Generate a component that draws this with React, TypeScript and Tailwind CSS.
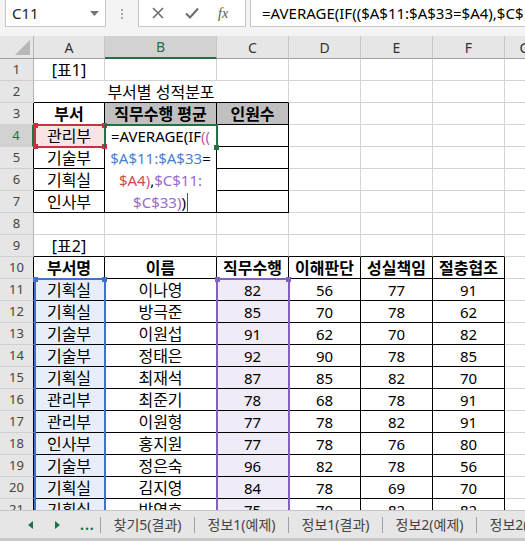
import clsx from 'clsx'

// column letters after the row-header column
const COLS = ['A', 'B', 'C', 'D', 'E', 'F', 'G']

// black bordered ranges: 표1 A3:C7, 표2 A10:F33
function isBox(r: number, c: number) {
  if (r >= 3 && r <= 7 && c >= 1 && c <= 3) return true
  if (r >= 10 && r <= 33 && c >= 1 && c <= 6) return true
  return false
}

const DATA = [
  ['기획실', '이나영', '82', '56', '77', '91'],
  ['기획실', '방극준', '85', '70', '78', '62'],
  ['기술부', '이원섭', '91', '62', '70', '82'],
  ['기술부', '정태은', '92', '90', '78', '85'],
  ['기획실', '최재석', '87', '85', '82', '70'],
  ['관리부', '최준기', '78', '68', '78', '91'],
  ['관리부', '이원형', '77', '78', '82', '91'],
  ['인사부', '홍지원', '77', '78', '76', '80'],
  ['기술부', '정은숙', '96', '82', '78', '56'],
  ['기획실', '김지영', '84', '78', '69', '70'],
  ['기획실', '박영호', '75', '70', '82', '82'],
]

const HANGUL = /[\uac00-\ud7a3]/

interface CellProps {
  r: number
  c: number
  span?: number
  rowSpan?: number
  bg?: string
  bold?: boolean
  children?: React.ReactNode
}

function Cell({ r, c, span = 1, rowSpan = 1, bg = 'bg-white', bold, children }: CellProps) {
  const right = isBox(r, c + span - 1) || isBox(r, c + span)
  const bottom = isBox(r + rowSpan - 1, c) || isBox(r + rowSpan, c)
  const korean = typeof children === 'string' && HANGUL.test(children)
  return (
    <div
      className={clsx(
        'flex items-center justify-center border-r border-b leading-[22px] text-black whitespace-nowrap overflow-visible',
        korean ? 'text-[16px]' : 'text-[15px]',
        right ? 'border-r-black' : 'border-r-[#d4d4d4]',
        bottom ? 'border-b-black' : 'border-b-[#d4d4d4]',
        span === 3 && 'col-span-3',
        rowSpan === 4 && 'row-span-4 items-start',
        bg,
        bold && 'font-bold'
      )}
    >
      {children}
    </div>
  )
}

function RowHead({ r }: { r: number }) {
  const active = r === 4
  return (
    <div
      className={clsx(
        'flex items-center justify-center border-b border-b-[#d0d0d0] text-[13px] font-["Noto_Sans",sans-serif]',
        active
          ? 'bg-[#d2d2d2] text-[#217346] border-r-2 border-r-[#217346]'
          : clsx('bg-[#e6e6e6] text-[#444] border-r', isBox(r, 1) ? 'border-r-black' : 'border-r-[#b4b4b4]')
      )}
    >
      {r}
    </div>
  )
}

function FormulaBar() {
  return (
    <div className="h-[36px] shrink-0 bg-[#f3f3f3] flex items-start">
      {/* name box */}
      <div className="ml-[5px] w-[101px] h-[27px] bg-white border border-t-0 border-[#c6c6c6] flex items-center justify-between pl-[6px] pr-[6px]">
        <span className="text-[15px] text-[#222] font-['Noto_Sans',sans-serif]">C11</span>
        <svg width="9" height="5" viewBox="0 0 9 5"><path d="M0 0h9L4.5 5z" fill="#777" /></svg>
      </div>
      <div className="w-[32px] h-[27px] flex flex-col items-center justify-center gap-[2px]">
        <span className="w-[2px] h-[2px] bg-[#a8a8a8]" />
        <span className="w-[2px] h-[2px] bg-[#a8a8a8]" />
        <span className="w-[2px] h-[2px] bg-[#a8a8a8]" />
      </div>
      {/* cancel / enter / fx */}
      <div className="w-[108px] h-[27px] bg-white border border-t-0 border-[#c6c6c6] flex items-center">
        <svg className="ml-[13px]" width="12" height="12" viewBox="0 0 12 12">
          <path d="M1 1l10 10M11 1L1 11" stroke="#6d6d6d" strokeWidth="1.6" />
        </svg>
        <svg className="ml-[21px]" width="14" height="12" viewBox="0 0 14 12">
          <path d="M1 6.5l4 4L13 1.5" stroke="#6d6d6d" strokeWidth="2" fill="none" />
        </svg>
        <span className="ml-[19px] text-[14px] italic font-['Liberation_Serif',serif] text-[#555]">fx</span>
      </div>
      <div className="ml-[4px] flex-1 h-[27px] bg-white border border-t-0 border-r-0 border-[#c6c6c6] flex items-center pl-[11px] overflow-hidden">
        <span className="text-[15px] text-black whitespace-nowrap font-['Noto_Sans',sans-serif]">
          =AVERAGE(IF(($A$11:$A$33=$A4),$C$11:$C$33))
        </span>
      </div>
    </div>
  )
}

function Sheet() {
  const rows: React.ReactNode[] = []

  for (let r = 1; r <= 21; r++) {
    rows.push(<RowHead key={`h${r}`} r={r} />)
    if (r === 1) {
      rows.push(<Cell key="a1" r={1} c={1}>[표1]</Cell>)
      for (let c = 2; c <= 7; c++) rows.push(<Cell key={`1-${c}`} r={1} c={c} />)
    } else if (r === 2) {
      rows.push(<Cell key="a2" r={2} c={1} span={3}>부서별 성적분포</Cell>)
      for (let c = 4; c <= 7; c++) rows.push(<Cell key={`2-${c}`} r={2} c={c} />)
    } else if (r === 3) {
      rows.push(<Cell key="a3" r={3} c={1} bold>부서</Cell>)
      rows.push(<Cell key="b3" r={3} c={2} bold bg="bg-[#c0c0c0]">직무수행 평균</Cell>)
      rows.push(<Cell key="c3" r={3} c={3} bold bg="bg-[#c0c0c0]">인원수</Cell>)
      for (let c = 4; c <= 7; c++) rows.push(<Cell key={`3-${c}`} r={3} c={c} />)
    } else if (r >= 4 && r <= 7) {
      const dept = ['관리부', '기술부', '기획실', '인사부'][r - 4]
      rows.push(
        <Cell key={`a${r}`} r={r} c={1} bg={r === 4 ? 'bg-[#f8e4e4]' : 'bg-white'}>
          {dept}
        </Cell>
      )
      if (r === 4) {
        rows.push(
          <Cell key="b4" r={4} c={2} rowSpan={4}>
            <div className="w-full flex flex-col items-center">
              <div>
                =AVERAGE(IF<span className="text-[#e0528a]">(</span>
                <span className="text-[#a45fc4]">(</span>
              </div>
              <div>
                <span className="text-[#4a7fd6]">$A$11:$A$33</span>=
              </div>
              <div>
                <span className="text-[#d6464f]">$A4</span>
                <span className="text-[#e0528a]">)</span>,<span className="text-[#9a6ad0]">$C$11:</span>
              </div>
              <div className="flex items-center">
                <span className="text-[#9a6ad0]">$C$33</span>
                <span className="text-[#a45fc4]">)</span>)
                <span className="ml-[1px] w-px h-[19px] bg-[#555]" />
              </div>
            </div>
          </Cell>
        )
      }
      for (let c = 3; c <= 7; c++) rows.push(<Cell key={`${r}-${c}`} r={r} c={c} />)
    } else if (r === 8) {
      for (let c = 1; c <= 7; c++) rows.push(<Cell key={`8-${c}`} r={8} c={c} />)
    } else if (r === 9) {
      rows.push(<Cell key="a9" r={9} c={1}>[표2]</Cell>)
      for (let c = 2; c <= 7; c++) rows.push(<Cell key={`9-${c}`} r={9} c={c} />)
    } else if (r === 10) {
      const heads = ['부서명', '이름', '직무수행', '이해판단', '성실책임', '절충협조']
      heads.forEach((h, i) =>
        rows.push(
          <Cell key={`10-${i}`} r={10} c={i + 1} bold>
            {h}
          </Cell>
        )
      )
      rows.push(<Cell key="10-7" r={10} c={7} />)
    } else {
      const d = DATA[r - 11]
      d.forEach((v, i) =>
        rows.push(
          <Cell
            key={`${r}-${i}`}
            r={r}
            c={i + 1}
            bg={i === 0 ? 'bg-[#e7eef9]' : i === 2 ? 'bg-[#efebf7]' : 'bg-white'}
          >
            {v}
          </Cell>
        )
      )
      rows.push(<Cell key={`${r}-7`} r={r} c={7} />)
    }
  }

  return (
    <div className="relative flex-1 overflow-hidden">
      <div className="grid grid-cols-[34px_71px_112px_72px_72px_72px_72px_40px] grid-rows-[23px_repeat(21,22px)] font-['Noto_Sans','Noto_Sans_CJK_KR',sans-serif]">
        {/* column headers */}
        <div className="bg-[#e6e6e6] border-r border-b border-r-[#b4b4b4] border-b-[#9e9e9e] flex items-end justify-end p-[3px]">
          <svg width="15" height="15" viewBox="0 0 15 15"><path d="M15 0V15H0z" fill="#b8b8b8" /></svg>
        </div>
        {COLS.map(col => (
          <div
            key={col}
            className={clsx(
              'flex items-center justify-center text-[14px] border-r border-r-[#c6c6c6] font-["Noto_Sans",sans-serif]',
              col === 'B'
                ? 'bg-[#d2d2d2] text-[#217346] border-b-2 border-b-[#217346]'
                : 'bg-[#e6e6e6] text-[#333] border-b border-b-[#9e9e9e]'
            )}
          >
            {col}
          </div>
        ))}
        {rows}
      </div>

      {/* A4 reference (red) */}
      <div className="absolute left-[34px] top-[88px] w-[72px] h-[24px] border-2 border-[#c8323e]">
        <span className="absolute -left-[3px] -top-[3px] w-[5px] h-[5px] bg-[#c8323e]" />
        <span className="absolute -right-[3px] -top-[3px] w-[5px] h-[5px] bg-[#c8323e]" />
        <span className="absolute -left-[3px] -bottom-[3px] w-[5px] h-[5px] bg-[#c8323e]" />
        <span className="absolute -right-[3px] -bottom-[3px] w-[5px] h-[5px] bg-[#c8323e]" />
      </div>

      {/* B4 editor (green) */}
      <div className="absolute left-[104px] top-[88px] w-[114px] h-[24px] border-2 border-b-0 border-[#217346]">
        <span className="absolute -right-[3px] -bottom-[2px] w-[5px] h-[5px] bg-[#217346]" />
      </div>

      {/* A11:A33 reference (blue) */}
      <div className="absolute left-[34px] top-[242px] w-[72px] h-[300px] border-2 border-b-0 border-[#3f72c8]">
        <span className="absolute -left-[3px] -top-[3px] w-[5px] h-[5px] bg-[#3f72c8]" />
        <span className="absolute -right-[3px] -top-[3px] w-[5px] h-[5px] bg-[#3f72c8]" />
      </div>

      {/* C11:C33 reference (purple) */}
      <div className="absolute left-[216px] top-[242px] w-[74px] h-[300px] border-2 border-b-0 border-[#8460c0]">
        <span className="absolute -left-[3px] -top-[3px] w-[5px] h-[5px] bg-[#8460c0]" />
        <span className="absolute -right-[3px] -top-[3px] w-[5px] h-[5px] bg-[#8460c0]" />
      </div>
    </div>
  )
}

function SheetTabs() {
  const tabs = ['찾기5(결과)', '정보1(예제)', '정보1(결과)', '정보2(예제)', '정보2(결과)']
  return (
    <div className="h-[31px] shrink-0 bg-[#e6e6e6] border-t border-t-[#c6c6c6] border-b-[3px] border-b-[#c8c8c8] flex items-center overflow-hidden font-['Noto_Sans','Noto_Sans_CJK_KR',sans-serif]">
      <svg className="ml-[28px] shrink-0" width="5" height="8" viewBox="0 0 5 8"><path d="M5 0V8L0 4z" fill="#217346" /></svg>
      <svg className="ml-[22px] shrink-0" width="5" height="8" viewBox="0 0 5 8"><path d="M0 0V8L5 4z" fill="#217346" /></svg>
      <span className="ml-[20px] shrink-0 w-[14px] text-[14px] font-bold text-[#217346] leading-none tracking-[1px]">...</span>
      <div className="ml-[6px] flex shrink-0">
        {tabs.map(t => (
          <div key={t} className="w-[94px] shrink-0 h-[16px] border-l border-l-[#a0a0a0] flex items-center justify-center">
            <span className="text-[14px] text-[#444] whitespace-nowrap">{t}</span>
          </div>
        ))}
      </div>
    </div>
  )
}

export default function App() {
  return (
    <div className="w-[525px] h-[541px] overflow-hidden bg-white flex flex-col">
      <FormulaBar />
      <Sheet />
      <SheetTabs />
    </div>
  )
}
